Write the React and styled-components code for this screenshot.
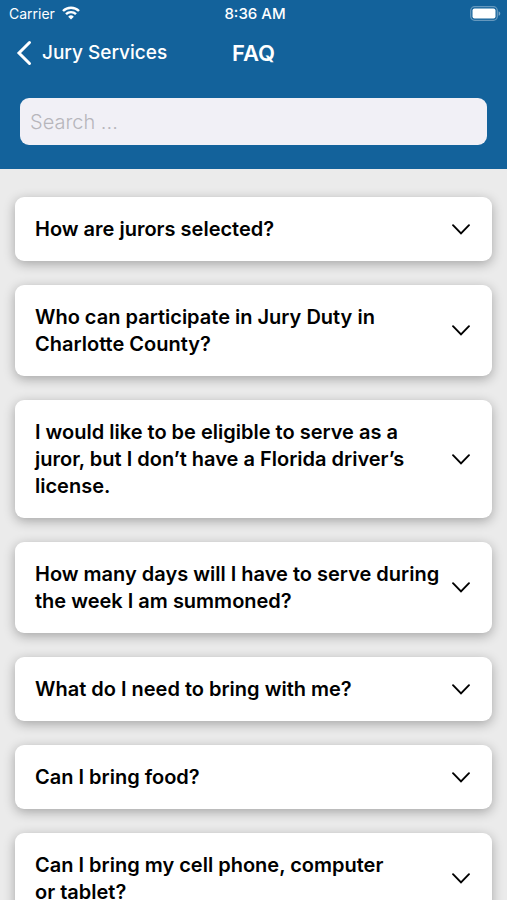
import React, { useState } from 'react'
import styled, { createGlobalStyle } from 'styled-components';

const GlobalStyle = createGlobalStyle`
  * {
    box-sizing: border-box;
  }

  html {
    scrollbar-width: none;
  }

  body {
    margin: 0;
    background: #ebebeb;
    color: #000;
    font-family: Inter, "Liberation Sans", sans-serif;
  }
`

const Screen = styled.div`
  min-height: 100vh;
  display: flex;
  flex-direction: column;
`

const Header = styled.header`
  flex: none;
  background: #13629b;
  color: #fff;
`

const StatusBar = styled.div`
  display: grid;
  grid-template-columns: 1fr auto 1fr;
  align-items: center;
  height: 26px;
  padding: 0 6px 0 9px;
  font-size: 14px;
`

const Carrier = styled.div`
  display: flex;
  align-items: center;
  gap: 7px;
`

const Time = styled.div`
  font-size: 15px;
  font-weight: 500;
`

const Battery = styled.svg`
  justify-self: end;
`

const NavBar = styled.nav`
  display: grid;
  grid-template-columns: 1fr auto 1fr;
  align-items: center;
  height: 53px;
  padding: 0 16px;
`

const BackLink = styled.a`
  display: flex;
  align-items: center;
  gap: 10px;
  color: #fff;
  font-size: 19px;
  font-weight: 500;
  text-decoration: none;
  white-space: nowrap;
`

const Title = styled.h1`
  margin: 0;
  font-size: 22px;
  font-weight: 600;
`

const SearchForm = styled.form`
  padding: 19px 20px 24px;
`

const SearchInput = styled.input`
  display: block;
  width: 100%;
  height: 47px;
  padding: 0 10px;
  border: 0;
  border-radius: 9px;
  background: #f1f0f6;
  color: #000;
  font-family: inherit;
  font-size: 20px;

  &::placeholder {
    color: #b7b6bc;
    font-weight: 300;
    opacity: 1;
  }
`

const QuestionList = styled.main`
  display: flex;
  flex-direction: column;
  gap: 24px;
  padding: 28px 15px;
`

const QuestionButton = styled.button`
  flex: none;
  display: flex;
  align-items: center;
  justify-content: space-between;
  gap: 8px;
  width: 100%;
  padding: 19px 20px 18px;
  border: 0;
  border-radius: 9px;
  background: #fff;
  box-shadow: 0 3px 12px rgba(0, 0, 0, 0.3);
  color: #000;
  font-family: inherit;
  font-size: 20px;
  font-weight: 600;
  line-height: 27px;
  text-align: left;
`

const Chevron = styled.svg`
  flex: none;
  transform: ${({ $open }) => ($open ? 'rotate(180deg)' : 'none')};
`

const questions = [
  'How are jurors selected?',
  'Who can participate in Jury Duty in Charlotte County?',
  'I would like to be eligible to serve as a juror, but I don’t have a Florida driver’s license.',
  'How many days will I have to serve during the week I am summoned?',
  'What do I need to bring with me?',
  'Can I bring food?',
  'Can I bring my cell phone, computer or\u00a0tablet?',
]

const WifiIcon = () =>
  <svg width="18" height="14" viewBox="0 0 18 14" fill="none" stroke="#fff" strokeWidth="2.4" aria-hidden="true">
    <path d="M1 5a11.3 11.3 0 0 1 16 0" />
    <path d="M4 8.200a7 7 0 0 1 10 0" />
    <path d="M9 13.500L6.200 10.700a4 4 0 0 1 5.600 0z" fill="#fff" stroke="none" />
  </svg>

const BatteryIcon = () =>
  <Battery width="31" height="15" viewBox="0 0 31 15" aria-hidden="true">
    <rect x="0.700" y="0.700" width="26.600" height="13.600" rx="4" fill="none" stroke="#fff" strokeOpacity="0.35" strokeWidth="1.300" />
    <rect x="2.500" y="2.500" width="23" height="10" rx="2" fill="#fff" />
    <path d="M28.600 5.200c2.200.8 2.200 3.800 0 4.600z" fill="#fff" fillOpacity="0.45" />
  </Battery>

const Question = ({ text }) => {
  const [open, setOpen] = useState(false)

  return (
    <QuestionButton type="button" aria-expanded={open} onClick={() => setOpen(!open)}>
      <span>{ text }</span>
      <Chevron $open={open} width="22" height="22" viewBox="0 0 22 22" fill="none" stroke="#000"
               strokeWidth="1.9" strokeLinecap="round" aria-hidden="true">
        <path d="M3 6.200l8 8.200 8-8.200" />
      </Chevron>
    </QuestionButton>
  )
}

const App = () => {
  const [search, setSearch] = useState('')
  const visible = questions.filter(text => text.toLowerCase().includes(search.toLowerCase()))

  return (
    <Screen>
      <GlobalStyle />
      <Header>
        <StatusBar>
          <Carrier>
            Carrier
            <WifiIcon />
          </Carrier>
          <Time>8:36 AM</Time>
          <BatteryIcon />
        </StatusBar>
        <NavBar>
          <BackLink href="#jury-services">
            <svg width="16" height="26" viewBox="0 0 16 26" fill="none" stroke="#fff" strokeWidth="3"
                 strokeLinecap="round" aria-hidden="true">
              <path d="M13.500 2.500L3 13l10.500 10.500" />
            </svg>
            Jury Services
          </BackLink>
          <Title>FAQ</Title>
        </NavBar>
        <SearchForm onSubmit={e => e.preventDefault()}>
          <SearchInput type="text" aria-label="Search" placeholder="Search ..."
                       value={search} onChange={e => setSearch(e.target.value)} />
        </SearchForm>
      </Header>
      <QuestionList>
        { visible.map(text => <Question key={text} text={text} />) }
      </QuestionList>
    </Screen>
  )
}

export default App;
